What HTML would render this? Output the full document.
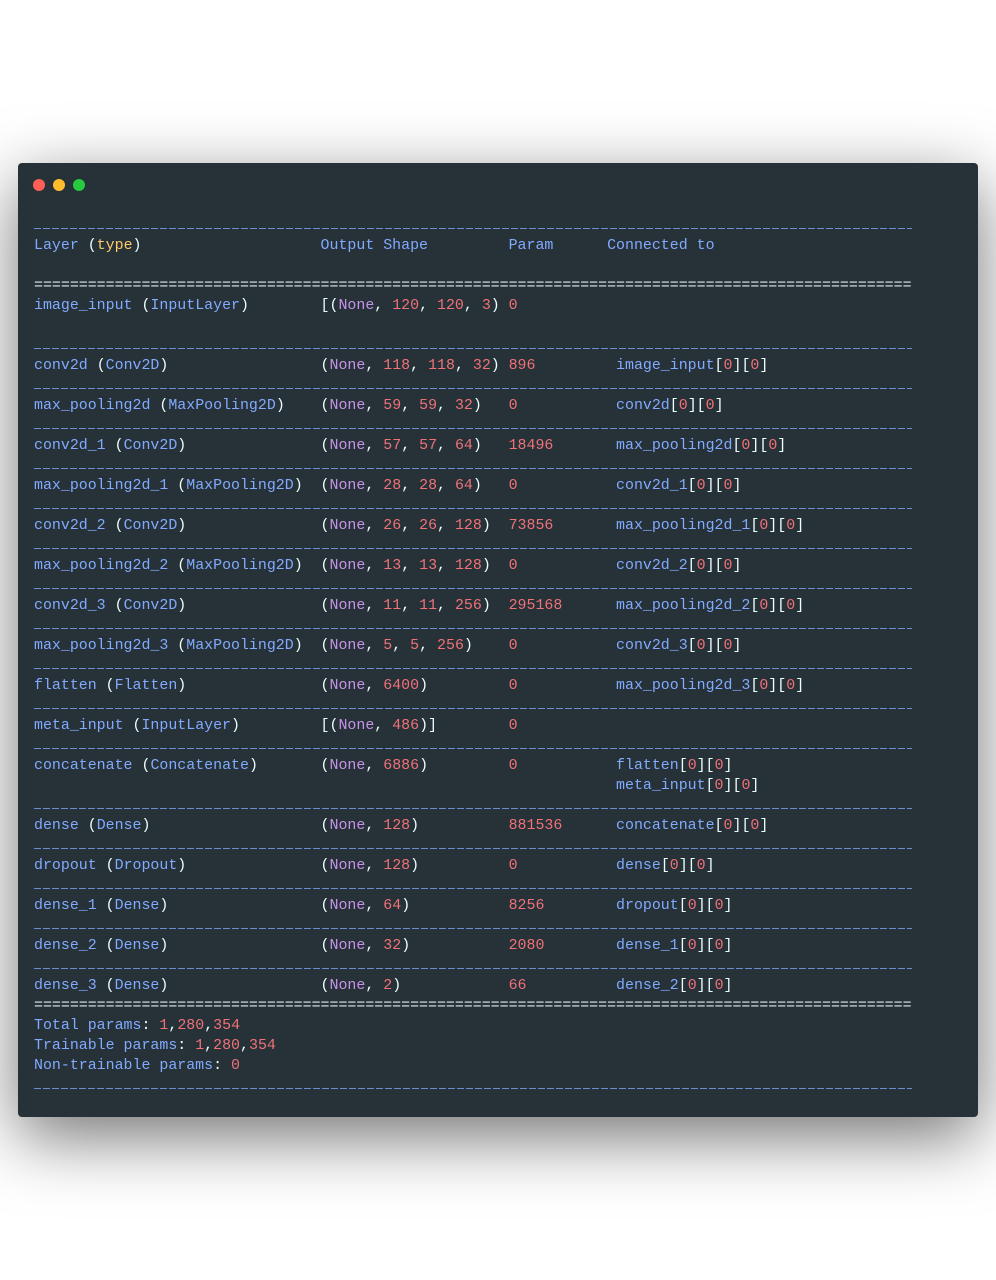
<!DOCTYPE html>
<html><head><meta charset="utf-8"><style>
html,body{margin:0;padding:0;background:#fff;width:996px;height:1280px;overflow:hidden}
.win{position:absolute;left:18px;top:163px;width:960px;height:954px;background:#263238;border-radius:4px;box-shadow:0 20px 68px rgba(0,0,0,0.55)}
.dot{position:absolute;top:16px;width:12px;height:12px;border-radius:50%}
.code{position:absolute;left:16px;top:53px;font-family:"Liberation Mono",monospace;font-size:14.93px;line-height:20px;color:#eeffff}
.l{height:20px;white-space:pre}
.c1{display:inline-block;width:32ch}
.c2{display:inline-block;width:21ch}
.c3{display:inline-block;width:12ch}
.h3{display:inline-block;width:11ch}
.b{color:#82aaff}.r{color:#f07178}.p{color:#c792ea}.y{color:#ffcb6b}.w{color:#eeffff}
.u{position:relative}
.u::after{content:"";position:absolute;left:0;top:12px;width:878px;height:1px;background:repeating-linear-gradient(90deg,rgba(130,170,255,.75) 0 7px,transparent 7px 9px)}
.e{color:#dfe6e8}
</style></head><body>
<div class="win">
<div class="dot" style="left:15px;background:#ff5f56"></div>
<div class="dot" style="left:35px;background:#ffbd2e"></div>
<div class="dot" style="left:55px;background:#27c93f"></div>
<div class="code"><div class="l u"></div><div class="l"><span class="c1"><span class="b">Layer</span> (<span class="y">type</span>)</span><span class="c2 b">Output Shape</span><span class="h3 b">Param</span><span class="b">Connected to</span></div><div class="l"></div><div class="l e">==================================================================================================</div><div class="l"><span class="c1"><span class="b">image_input</span> (<span class="b">InputLayer</span>)</span><span class="c2">[(<span class="p">None</span>, <span class="r">120</span>, <span class="r">120</span>, <span class="r">3</span>)</span><span class="c3 r">0</span></div><div class="l"></div><div class="l u"></div><div class="l"><span class="c1"><span class="b">conv2d</span> (<span class="b">Conv2D</span>)</span><span class="c2">(<span class="p">None</span>, <span class="r">118</span>, <span class="r">118</span>, <span class="r">32</span>)</span><span class="c3 r">896</span><span class="b">image_input</span>[<span class="r">0</span>][<span class="r">0</span>]</div><div class="l u"></div><div class="l"><span class="c1"><span class="b">max_pooling2d</span> (<span class="b">MaxPooling2D</span>)</span><span class="c2">(<span class="p">None</span>, <span class="r">59</span>, <span class="r">59</span>, <span class="r">32</span>)</span><span class="c3 r">0</span><span class="b">conv2d</span>[<span class="r">0</span>][<span class="r">0</span>]</div><div class="l u"></div><div class="l"><span class="c1"><span class="b">conv2d_1</span> (<span class="b">Conv2D</span>)</span><span class="c2">(<span class="p">None</span>, <span class="r">57</span>, <span class="r">57</span>, <span class="r">64</span>)</span><span class="c3 r">18496</span><span class="b">max_pooling2d</span>[<span class="r">0</span>][<span class="r">0</span>]</div><div class="l u"></div><div class="l"><span class="c1"><span class="b">max_pooling2d_1</span> (<span class="b">MaxPooling2D</span>)</span><span class="c2">(<span class="p">None</span>, <span class="r">28</span>, <span class="r">28</span>, <span class="r">64</span>)</span><span class="c3 r">0</span><span class="b">conv2d_1</span>[<span class="r">0</span>][<span class="r">0</span>]</div><div class="l u"></div><div class="l"><span class="c1"><span class="b">conv2d_2</span> (<span class="b">Conv2D</span>)</span><span class="c2">(<span class="p">None</span>, <span class="r">26</span>, <span class="r">26</span>, <span class="r">128</span>)</span><span class="c3 r">73856</span><span class="b">max_pooling2d_1</span>[<span class="r">0</span>][<span class="r">0</span>]</div><div class="l u"></div><div class="l"><span class="c1"><span class="b">max_pooling2d_2</span> (<span class="b">MaxPooling2D</span>)</span><span class="c2">(<span class="p">None</span>, <span class="r">13</span>, <span class="r">13</span>, <span class="r">128</span>)</span><span class="c3 r">0</span><span class="b">conv2d_2</span>[<span class="r">0</span>][<span class="r">0</span>]</div><div class="l u"></div><div class="l"><span class="c1"><span class="b">conv2d_3</span> (<span class="b">Conv2D</span>)</span><span class="c2">(<span class="p">None</span>, <span class="r">11</span>, <span class="r">11</span>, <span class="r">256</span>)</span><span class="c3 r">295168</span><span class="b">max_pooling2d_2</span>[<span class="r">0</span>][<span class="r">0</span>]</div><div class="l u"></div><div class="l"><span class="c1"><span class="b">max_pooling2d_3</span> (<span class="b">MaxPooling2D</span>)</span><span class="c2">(<span class="p">None</span>, <span class="r">5</span>, <span class="r">5</span>, <span class="r">256</span>)</span><span class="c3 r">0</span><span class="b">conv2d_3</span>[<span class="r">0</span>][<span class="r">0</span>]</div><div class="l u"></div><div class="l"><span class="c1"><span class="b">flatten</span> (<span class="b">Flatten</span>)</span><span class="c2">(<span class="p">None</span>, <span class="r">6400</span>)</span><span class="c3 r">0</span><span class="b">max_pooling2d_3</span>[<span class="r">0</span>][<span class="r">0</span>]</div><div class="l u"></div><div class="l"><span class="c1"><span class="b">meta_input</span> (<span class="b">InputLayer</span>)</span><span class="c2">[(<span class="p">None</span>, <span class="r">486</span>)]</span><span class="c3 r">0</span></div><div class="l u"></div><div class="l"><span class="c1"><span class="b">concatenate</span> (<span class="b">Concatenate</span>)</span><span class="c2">(<span class="p">None</span>, <span class="r">6886</span>)</span><span class="c3 r">0</span><span class="b">flatten</span>[<span class="r">0</span>][<span class="r">0</span>]</div><div class="l"><span class="c1"></span><span class="c2"></span><span class="c3"></span><span class="b">meta_input</span>[<span class="r">0</span>][<span class="r">0</span>]</div><div class="l u"></div><div class="l"><span class="c1"><span class="b">dense</span> (<span class="b">Dense</span>)</span><span class="c2">(<span class="p">None</span>, <span class="r">128</span>)</span><span class="c3 r">881536</span><span class="b">concatenate</span>[<span class="r">0</span>][<span class="r">0</span>]</div><div class="l u"></div><div class="l"><span class="c1"><span class="b">dropout</span> (<span class="b">Dropout</span>)</span><span class="c2">(<span class="p">None</span>, <span class="r">128</span>)</span><span class="c3 r">0</span><span class="b">dense</span>[<span class="r">0</span>][<span class="r">0</span>]</div><div class="l u"></div><div class="l"><span class="c1"><span class="b">dense_1</span> (<span class="b">Dense</span>)</span><span class="c2">(<span class="p">None</span>, <span class="r">64</span>)</span><span class="c3 r">8256</span><span class="b">dropout</span>[<span class="r">0</span>][<span class="r">0</span>]</div><div class="l u"></div><div class="l"><span class="c1"><span class="b">dense_2</span> (<span class="b">Dense</span>)</span><span class="c2">(<span class="p">None</span>, <span class="r">32</span>)</span><span class="c3 r">2080</span><span class="b">dense_1</span>[<span class="r">0</span>][<span class="r">0</span>]</div><div class="l u"></div><div class="l"><span class="c1"><span class="b">dense_3</span> (<span class="b">Dense</span>)</span><span class="c2">(<span class="p">None</span>, <span class="r">2</span>)</span><span class="c3 r">66</span><span class="b">dense_2</span>[<span class="r">0</span>][<span class="r">0</span>]</div><div class="l e">==================================================================================================</div><div class="l"><span class="b">Total params</span>: <span class="r">1</span>,<span class="r">280</span>,<span class="r">354</span></div><div class="l"><span class="b">Trainable params</span>: <span class="r">1</span>,<span class="r">280</span>,<span class="r">354</span></div><div class="l"><span class="b">Non-trainable params</span>: <span class="r">0</span></div><div class="l u"></div></div>
</div>
</body></html>
